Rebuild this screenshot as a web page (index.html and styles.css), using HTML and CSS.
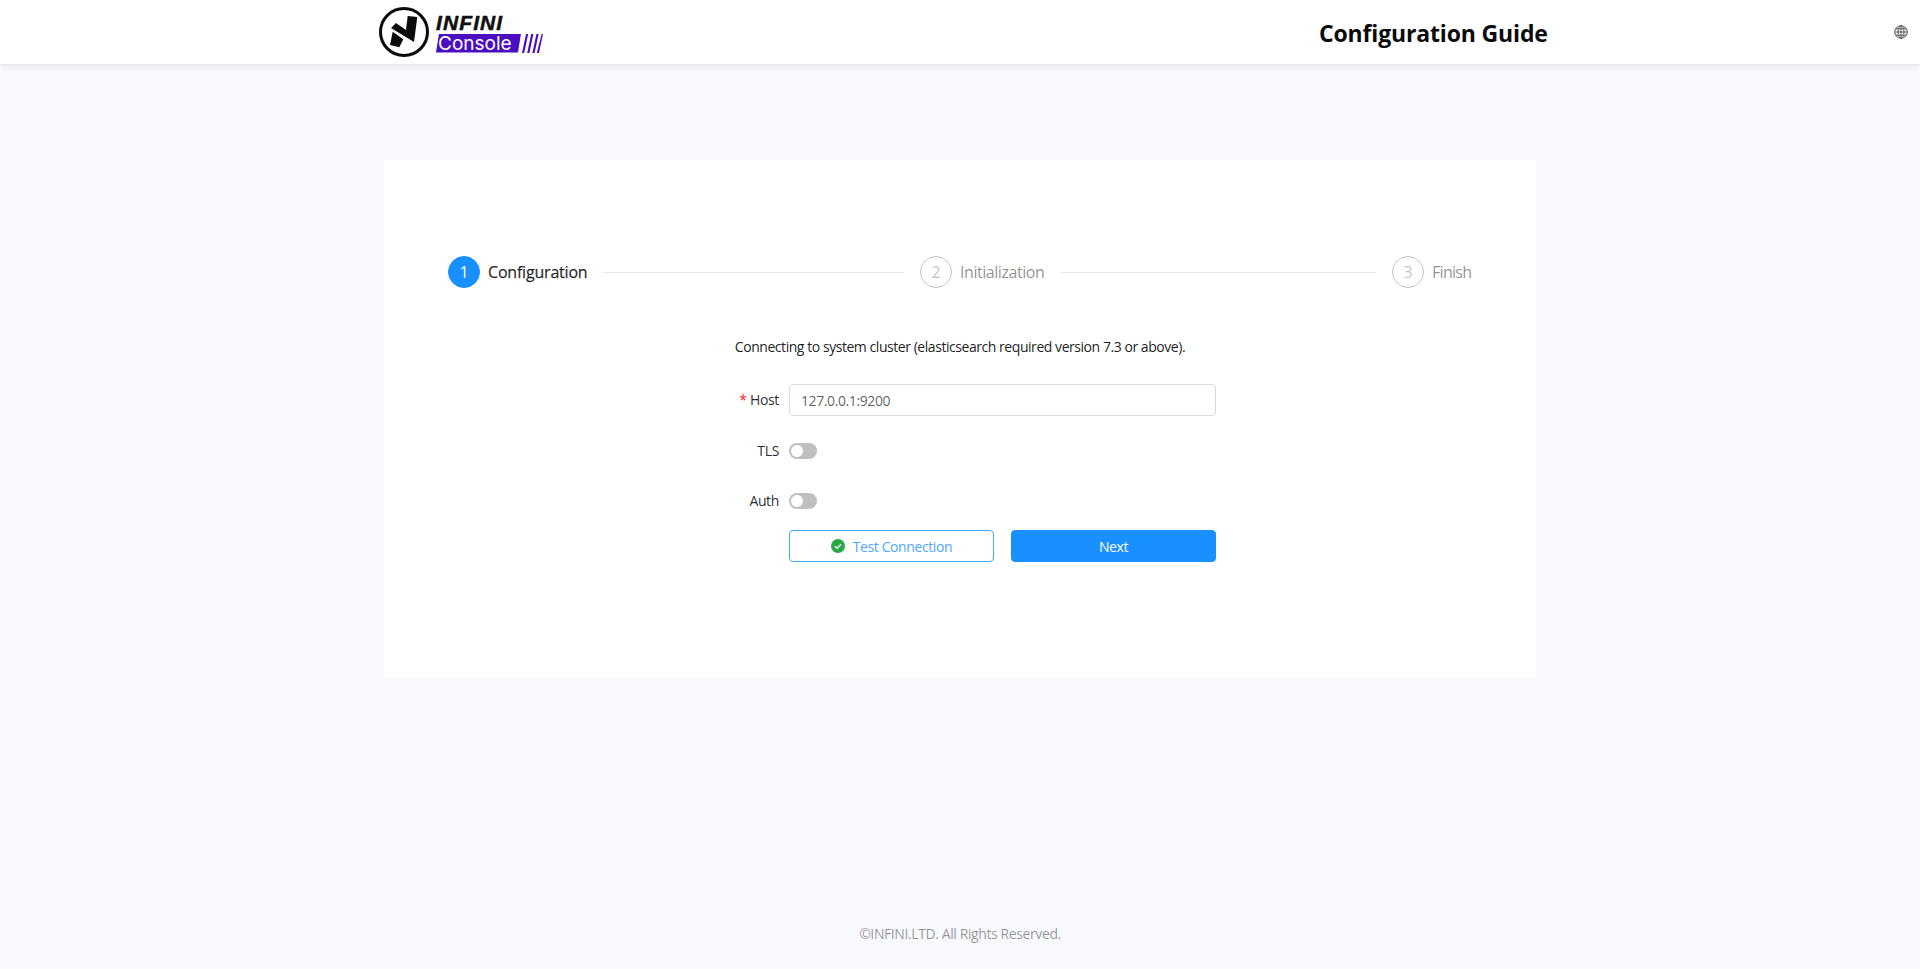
FILE: index.html
```html
<!DOCTYPE html>
<html lang="en">
<head>
    <meta charset="UTF-8">
    <meta name="viewport" content="width=device-width, initial-scale=1.0">
    <title>Configuration Guide</title>
    <link rel="stylesheet" href="styles.css">
</head>
<body>
    <header class="top">
        <div class="logo">
            <svg class="logo_mark" width="52" height="52" viewBox="0 0 52 52">
                <circle cx="26" cy="26" r="23.5" fill="#fff" stroke="#0b0b0b" stroke-width="3"/>
                <path d="M18 17 L28 24 L29.7 10 L39.3 11 L36 36 L13 22 Z" fill="#0b0b0b"/>
                <path d="M14.7 25.7 L25.3 33.3 L21.3 41.3 L12 39 Z" fill="#0b0b0b"/>
            </svg>
            <div class="logo_text">
                <span class="logo_infini">INFINI</span>
                <div class="logo_row">
                    <span class="logo_console">Console</span>
                    <svg class="logo_stripes" width="21" height="19" viewBox="0 0 21 19">
                        <path d="M4 0h2.2L2.2 19H0z M9.2 0h2.2l-4 19H5.2z M14.4 0h2.2l-4 19h-2.2z M19.6 0h1.4l-4 19h-2.2z" fill="#4a0fc0"/>
                    </svg>
                </div>
            </div>
        </div>
        <h1 class="guide_title">Configuration Guide</h1>
        <svg class="globe" width="14" height="14" viewBox="0 0 14 14" fill="none" stroke="#555" stroke-width="1">
            <circle cx="7" cy="7" r="6.3"/>
            <ellipse cx="7" cy="7" rx="3" ry="6.3"/>
            <path d="M7 .7v12.6M.7 7h12.6M1.6 3.8h10.8M1.6 10.2h10.8"/>
        </svg>
    </header>

    <main class="page">
        <section class="card">
            <div class="steps">
                <div class="step active">
                    <span class="num">1</span>
                    <span class="step_name">Configuration</span>
                    <span class="line"></span>
                </div>
                <div class="step">
                    <span class="num">2</span>
                    <span class="step_name">Initialization</span>
                    <span class="line"></span>
                </div>
                <div class="step last">
                    <span class="num">3</span>
                    <span class="step_name">Finish</span>
                </div>
            </div>

            <p class="intro">Connecting to system cluster (elasticsearch required version 7.3 or above).</p>

            <form class="config_form">
                <label class="field_label"><span class="req">*</span> Host</label>
                <input class="host_input" type="text" value="127.0.0.1:9200">

                <label class="field_label tls_row">TLS</label>
                <div class="switch tls_row"><span class="knob"></span></div>

                <label class="field_label auth_row">Auth</label>
                <div class="switch auth_row"><span class="knob"></span></div>

                <div class="buttons">
                    <button type="button" class="btn btn_test">
                        <svg width="14" height="14" viewBox="0 0 14 14">
                            <circle cx="7" cy="7" r="7" fill="#28a745"/>
                            <path d="M4 7.2l2.1 2.1L10 5.2" fill="none" stroke="#fff" stroke-width="1.4"/>
                        </svg>
                        Test Connection
                    </button>
                    <button type="button" class="btn btn_next">Next</button>
                </div>
            </form>
        </section>
    </main>

    <footer class="foot">©INFINI.LTD. All Rights Reserved.</footer>
</body>
</html>
```

FILE: styles.css
```css
html, body { margin: 0; padding: 0; height: 100%; }
body {
    background: #f8f9fd;
    font-family: "Open Sans", "Noto Sans", sans-serif;
    font-size: 14px;
    color: rgba(0, 0, 0, 0.85);
    display: flex;
    flex-direction: column;
}
h1, p { margin: 0; }

.top {
    height: 64px;
    background: #fff;
    box-shadow: 0 1px 6px rgba(0, 0, 0, 0.12);
    display: flex;
    align-items: center;
    padding-left: 378px;
    padding-right: 12px;
}
.logo { display: flex; align-items: center; gap: 6px; width: 166px; flex: none; }
.logo_mark { display: block; flex: none; }
.logo_text { display: flex; flex-direction: column; gap: 3px; margin-top: 3px; }
.logo_infini {
    font-family: "Liberation Sans", sans-serif;
    font-weight: 700;
    font-style: italic;
    font-size: 21px;
    line-height: 16px;
    color: #111;
    letter-spacing: 1.1px;
    -webkit-text-stroke: 0.5px #111;
}
.logo_row { display: flex; align-items: center; gap: 1px; }
.logo_console {
    position: relative;
    z-index: 0;
    color: #fff;
    font-family: "Inter", sans-serif;
    font-weight: 400;
    font-size: 19px;
    line-height: 19px;
    width: 85px;
    padding-left: 2px;
    box-sizing: border-box;
}
.logo_console::before {
    content: "";
    position: absolute;
    inset: 0;
    z-index: -1;
    background: #4a0fc0;
    clip-path: polygon(3px 0, 100% 0, calc(100% - 3px) 100%, 0 100%);
}
.logo_stripes { flex: none; }
.guide_title {
    font-size: 23px;
    font-weight: 700;
    color: #0b0b0b;
    margin-left: 775px;
    margin-top: 2px;
    letter-spacing: -0.15px;
    white-space: nowrap;
}
.globe { margin-left: auto; }

.page { flex: 1; padding-top: 96px; }
.card {
    width: 1152px;
    height: 517px;
    margin: 0 auto;
    background: #fff;
    padding: 96px 64px 0;
    box-sizing: border-box;
}

.steps { display: flex; align-items: center; }
.step { flex: 1; display: flex; align-items: center; gap: 8px; padding-right: 16px; }
.step.last { flex: none; width: 80px; padding-right: 0; }
.step.last .step_name { letter-spacing: -0.7px; }
.num {
    width: 32px;
    height: 32px;
    flex: none;
    box-sizing: border-box;
    border: 1px solid rgba(0, 0, 0, 0.25);
    border-radius: 50%;
    display: flex;
    align-items: center;
    justify-content: center;
    font-size: 16px;
    color: rgba(0, 0, 0, 0.25);
}
.step_name { font-size: 16px; color: rgba(0, 0, 0, 0.45); letter-spacing: -0.45px; white-space: nowrap; }
.step.active .num { background: #1890ff; border-color: #1890ff; color: #fff; }
.step.active .step_name {
    color: rgba(0, 0, 0, 0.85);
    letter-spacing: -0.2px;
    -webkit-text-stroke: 0.25px rgba(0, 0, 0, 0.85);
}
.line { flex: 1; height: 1px; background: #e8e8e8; margin-left: 8px; }

.intro {
    text-align: center;
    font-size: 14px;
    letter-spacing: -0.45px;
    line-height: 22px;
    color: rgba(0, 0, 0, 0.9);
    margin-top: 48px;
}

.config_form {
    width: 512px;
    margin: 26px auto 0;
    display: grid;
    grid-template-columns: 75px 427px;
    column-gap: 10px;
    align-items: center;
}
.field_label { text-align: right; line-height: 16px; letter-spacing: -0.35px; color: rgba(0, 0, 0, 0.85); }
.req { color: #f5222d; }
.host_input {
    height: 32px;
    box-sizing: border-box;
    border: 1px solid #d9d9d9;
    border-radius: 4px;
    padding: 0 11px;
    font: inherit;
    letter-spacing: -0.4px;
    color: rgba(0, 0, 0, 0.65);
    width: 100%;
}
.tls_row { margin-top: 27px; }
.auth_row { margin-top: 34px; }

.switch {
    width: 28px;
    height: 16px;
    border-radius: 8px;
    background: #bfbfbf;
    position: relative;
}
.knob {
    position: absolute;
    left: 2px;
    top: 2px;
    width: 12px;
    height: 12px;
    border-radius: 50%;
    background: #fff;
}

.buttons {
    grid-column: 2;
    display: flex;
    gap: 17px;
    margin-top: 21px;
}
.btn {
    flex: 1;
    height: 32px;
    border-radius: 4px;
    font: inherit;
    letter-spacing: -0.4px;
    display: flex;
    align-items: center;
    justify-content: center;
    gap: 8px;
    padding: 0;
}
.btn_test { background: #fff; border: 1px solid #40a9ff; color: #4fa8ff; }
.btn_next { background: #1890ff; border: 1px solid #1890ff; color: #fff; }

.foot {
    text-align: center;
    color: rgba(0, 0, 0, 0.42);
    line-height: 22px;
    letter-spacing: -0.4px;
    padding-bottom: 24px;
}
```
